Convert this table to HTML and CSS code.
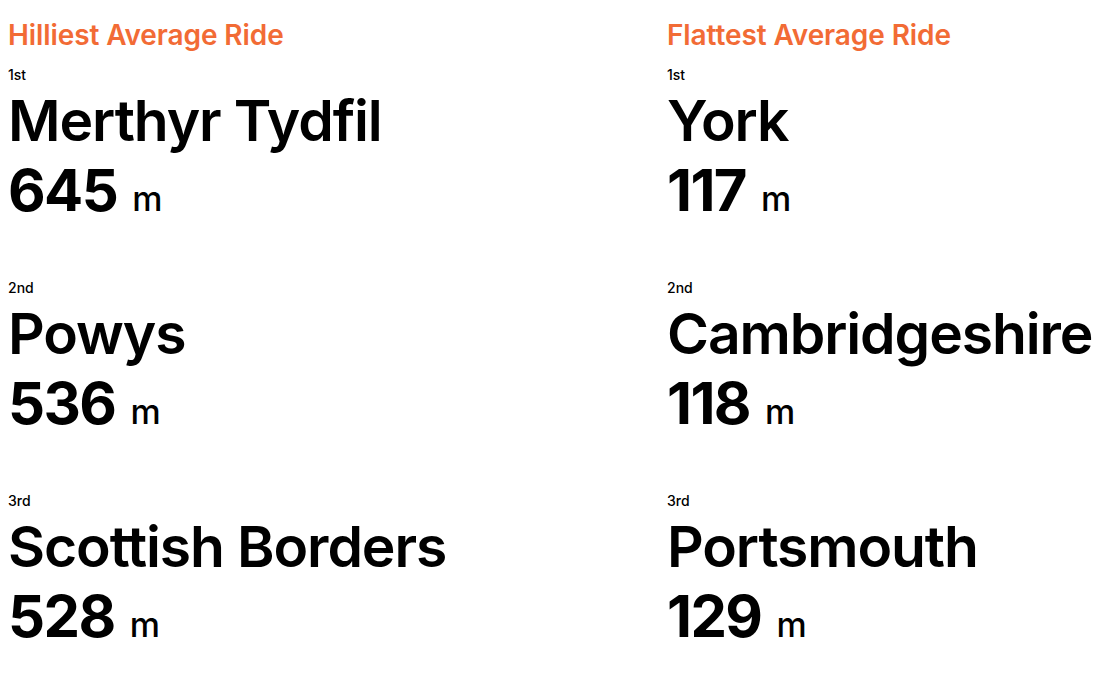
FILE: index.html
```html
<!DOCTYPE html>
<html lang="en">
<head>
<meta charset="utf-8">
<link rel="stylesheet" href="styles.css">
</head>
<body>
<div class="board">
  <section class="col">
    <h2 class="title">Hilliest Average Ride</h2>
    <div class="entry">
      <div class="rank">1st</div>
      <div class="name">Merthyr Tydfil</div>
      <div class="value">645 <span class="unit">m</span></div>
    </div>
    <div class="entry">
      <div class="rank">2nd</div>
      <div class="name">Powys</div>
      <div class="value">536 <span class="unit">m</span></div>
    </div>
    <div class="entry">
      <div class="rank">3rd</div>
      <div class="name">Scottish Borders</div>
      <div class="value">528 <span class="unit">m</span></div>
    </div>
  </section>
  <section class="col">
    <h2 class="title">Flattest Average Ride</h2>
    <div class="entry">
      <div class="rank">1st</div>
      <div class="name">York</div>
      <div class="value">117 <span class="unit">m</span></div>
    </div>
    <div class="entry">
      <div class="rank">2nd</div>
      <div class="name">Cambridgeshire</div>
      <div class="value">118 <span class="unit">m</span></div>
    </div>
    <div class="entry">
      <div class="rank">3rd</div>
      <div class="name">Portsmouth</div>
      <div class="value">129 <span class="unit">m</span></div>
    </div>
  </section>
</div>
</body>
</html>
```
FILE: styles.css
```css
html, body {
  margin: 0;
  padding: 0;
  background: #fff;
}
body {
  font-family: Inter, "Noto Sans", sans-serif;
  color: #000;
}
.board {
  display: grid;
  grid-template-columns: 659px 1fr;
  padding: 18px 0 0 8px;
}
.col {
  display: flex;
  flex-direction: column;
  gap: 58px;
}
.title {
  margin: 0 0 -43px 0;
  font-size: 28px;
  line-height: 34px;
  font-weight: 600;
  color: #f26b35;
  letter-spacing: -0.1px;
}
.entry {
  display: flex;
  flex-direction: column;
}
.rank {
  font-size: 14px;
  line-height: 16px;
  font-weight: 500;
  margin-bottom: 6px;
}
.name {
  font-size: 57px;
  line-height: 64px;
  font-weight: 600;
  letter-spacing: -1.1px;
  margin-bottom: 5px;
  white-space: nowrap;
}
.value {
  font-size: 58px;
  line-height: 64px;
  font-weight: 700;
  letter-spacing: -1.6px;
}
.unit {
  font-size: 34px;
  line-height: 1;
  font-weight: 500;
  letter-spacing: 0;
  margin-left: 3px;
}
```
